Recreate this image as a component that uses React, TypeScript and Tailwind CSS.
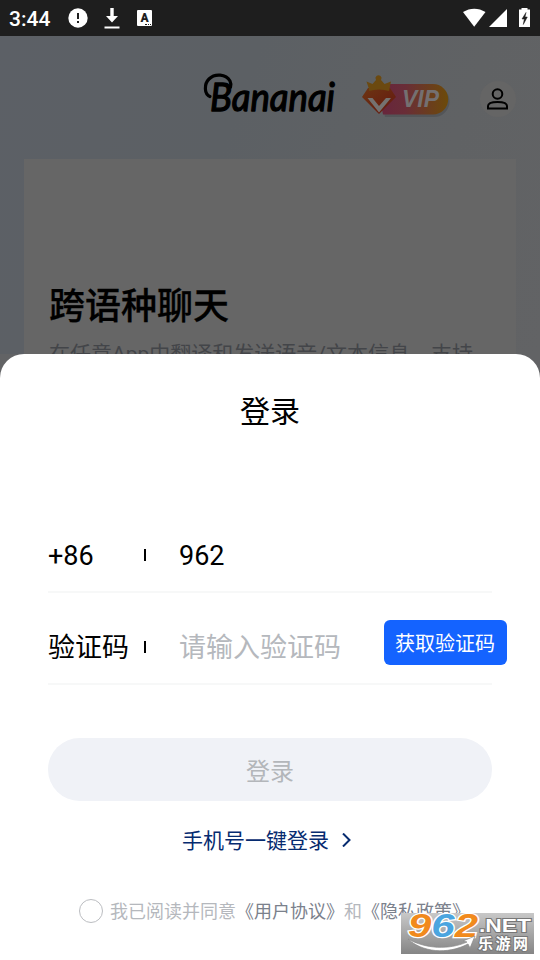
import { useState } from "react";

function StatusBar() {
  return (
    <div className="flex h-9 items-center justify-between bg-[#1e1e1e] pr-[9px] pl-[9px] text-white">
      <div className="flex items-center">
        <span className="w-[59px] pt-px text-[21px] leading-9 font-medium">3:44</span>
        <svg className="h-5 w-5" viewBox="0 0 20 20">
          <circle cx="10" cy="10" r="9.7" fill="#fff" />
          <path d="M10 5v6M10 13v2" stroke="#1e1e1e" strokeWidth="2" />
        </svg>
        <svg className="ml-4 h-[22px] w-4" viewBox="0 0 16 22">
          <path d="M6.300 1h3.400v8H14l-6 6.500L2 9h4.300z" fill="#fff" />
          <path d="M0.500 20.500h15" stroke="#fff" strokeWidth="2" />
        </svg>
        <div className="relative ml-[17px] flex h-4 w-[15px] items-center justify-center rounded-[1px] bg-white text-[12px] leading-none font-black text-[#1e1e1e]">
          A
          <span className="absolute right-[1px] bottom-[1px] h-px w-[6px] border-b border-dotted border-[#1e1e1e]" />
        </div>
      </div>
      <svg className="h-5 w-[68px]" viewBox="0 0 68 20">
        <path d="M0 4C7-0.500 15.500-0.500 22.500 4L11.200 18.700z" fill="#fff" />
        <path d="M44 1V19H26z" fill="#fff" />
        <path d="M58.500 0h6v1.500H67V19H56V1.500h2.500z" fill="#fff" />
        <path d="M63 4.500l-4 6.500h2.300l-1 5.500 4-7.500h-2.300z" fill="#1e1e1e" stroke="#1e1e1e" strokeWidth="0.500" />
      </svg>
    </div>
  );
}

function Logo() {
  return (
    <div className="relative h-[46px] w-[132px]">
      <svg className="absolute inset-0 h-full w-full overflow-visible" viewBox="0 0 132 46">
        {/* swash around the capital */}
        <path
          d="M6 23.500C0 21 0 11 5 6C11 0 22 1 26 8C27 10 27 12 26.500 14"
          fill="none"
          stroke="#000"
          strokeWidth="3.200"
          strokeLinecap="round"
        />
        <text
          x="6"
          y="38"
          textLength="125"
          lengthAdjust="spacingAndGlyphs"
          stroke="#000"
          strokeWidth="1.3"
          strokeLinejoin="round"
          className="font-['Lato',sans-serif] text-[39px] font-normal italic"
        >
          Bananai
        </text>
      </svg>
    </div>
  );
}

function VipBadge() {
  return (
    <svg className="h-[46px] w-[92px]" viewBox="0 0 92 46">
      <defs>
        <linearGradient id="pill" x1="0" x2="1">
          <stop offset="0" stopColor="#67243d" />
          <stop offset="0.400" stopColor="#692d37" />
          <stop offset="1" stopColor="#6c4a09" />
        </linearGradient>
        <linearGradient id="gem" x1="0" y1="0" x2="1" y2="1">
          <stop offset="0" stopColor="#6c3512" />
          <stop offset="1" stopColor="#651710" />
        </linearGradient>
      </defs>
      <path d="M18 13h55a15.500 15.500 0 0 1 0 31H24z" fill="#4e5052" opacity="0.700" />
      <path d="M16 11h56a15.200 15.200 0 0 1 0 30.400H22z" fill="url(#pill)" />
      <path d="M7 15L29 15 35 24 18 41 1 24z" fill="url(#gem)" />
      <path d="M8 16L5.500 8.500l6 2.500 3.500-4a3 3 0 1 1 5 0l3.500 4 6.500-2.500L28 18q-10-3-20 0z" fill="#6b4910" />
      <path d="M6.500 25h5l6.500 8 7-8h5L18 39.500z" fill="#757270" />
      <text
        x="41"
        y="34"
        textLength="37"
        lengthAdjust="spacingAndGlyphs"
        fill="#747071"
        className="font-['Liberation_Sans',sans-serif] text-[23px] font-bold italic"
      >
        VIP
      </text>
    </svg>
  );
}

function Header() {
  return (
    <div className="flex h-[123px] items-start pt-[37px] pl-[204px]">
      <Logo />
      <div className="ml-[25px]">
        <VipBadge />
      </div>
      <div className="mt-2 ml-[27px] flex h-9 w-9 items-center justify-center rounded-full bg-[#656565]">
        <svg className="h-[22px] w-[22px]" viewBox="0 0 22 22" fill="none" stroke="#000" strokeWidth="2">
          <circle cx="10.500" cy="6" r="4.800" />
          <path d="M1 20.500v-2.500c0-5.500 19-5.500 19 0v2.500z" />
        </svg>
      </div>
    </div>
  );
}

interface FieldProps {
  label: string;
  children: React.ReactNode;
}

function Field({ label, children }: FieldProps) {
  return (
    <div className="flex h-[92px] items-center border-b-2 border-[#f7f8f8] pt-[18px] text-[27px] text-black">
      <span className="w-24 pt-[3px]">{label}</span>
      <span className="h-3 w-[2px] bg-black" />
      <div className="ml-[33px] flex flex-1 items-center pt-[3px]">{children}</div>
    </div>
  );
}

function Watermark() {
  return (
    <svg className="absolute right-[6px] bottom-[6px] h-[48px] w-[133px] overflow-visible" viewBox="0 0 133 48">
      <defs>
        <linearGradient id="mark" x1="0" y1="0" x2="0" y2="1">
          <stop offset="0" stopColor="#c8c8c8" />
          <stop offset="1" stopColor="#858585" />
        </linearGradient>
      </defs>
      <rect y="7" width="133" height="41" fill="url(#mark)" />
      <text
        x="7"
        y="31"
        textLength="70"
        lengthAdjust="spacingAndGlyphs"
        stroke="#fff"
        strokeWidth="2.5"
        paintOrder="stroke"
        className="font-['Liberation_Sans',sans-serif] text-[34px] font-bold italic"
      >
        <tspan fill="#f18a1c">9</tspan>
        <tspan fill="#4ba5df">6</tspan>
        <tspan fill="#f18a1c">2</tspan>
      </text>
      <text
        x="78"
        y="26"
        textLength="52"
        lengthAdjust="spacingAndGlyphs"
        fill="#fff"
        stroke="#777"
        strokeWidth="2"
        paintOrder="stroke"
        className="font-['Liberation_Sans',sans-serif] text-[19px] font-bold"
      >
        .NET
      </text>
      <text
        x="77"
        y="43"
        textLength="50"
        fill="#fff"
        stroke="#777"
        strokeWidth="2"
        paintOrder="stroke"
        className="font-['Noto_Sans_CJK_SC',sans-serif] text-[15px] font-bold"
      >
        乐游网
      </text>
      <path
        d="M7 33C25 43 48 44 66 36l-4-1 12-5-5 12-2-4C46 49 21 46 7 33z"
        fill="#fff"
        stroke="#888"
        strokeWidth="0.700"
      />
    </svg>
  );
}

function LoginSheet() {
  const [agreed, setAgreed] = useState(false);

  return (
    <div className="relative z-10 flex h-[606px] flex-col rounded-t-[24px] bg-white px-12">
      <h2 className="mt-[36px] h-11 text-center text-[30px] leading-11 text-black">登录</h2>

      <div className="mt-[67px]">
        <Field label="+86">962</Field>
        <div className="relative">
          <Field label="验证码">
            <span className="text-[#b5b8bd]">请输入验证码</span>
          </Field>
          <button className="absolute top-[27px] -right-[15px] h-[45px] w-[123px] rounded-[6px] bg-[#1463ff] pt-[2px] pr-px text-[20px] text-white">
            获取验证码
          </button>
        </div>
      </div>

      <button className="mt-[53px] h-[63px] shrink-0 rounded-full bg-[#f0f2f7] pt-1 text-[24px] text-[#b3b6ba]">
        登录
      </button>

      <div className="mt-[26px] flex h-[30px] items-center pl-[134px] text-[21px] text-[#062b70]">
        手机号一键登录
        <svg className="mb-1 ml-3 h-[14px] w-3" viewBox="0 0 12 14" fill="none" stroke="currentColor" strokeWidth="2">
          <path d="M2 0.500l6.500 6.500-6.500 6.500" />
        </svg>
      </div>

      <div className="mt-[39px] ml-[31px] flex h-[30px] items-center text-[18px] whitespace-nowrap text-[#b5b8bd]">
        <button
          className={`mr-[7px] h-6 w-6 shrink-0 rounded-full border ${agreed ? "border-[#1463ff] bg-[#1463ff]" : "border-[#bbbdc1]"}`}
          onClick={() => setAgreed(!agreed)}
        />
        <p>
          我已阅读并同意
          <span className="text-[#7b818c]">《用户协议》</span>和
          <span className="text-[#7b818c]">《隐私政策》</span>
        </p>
      </div>

      <Watermark />
    </div>
  );
}

export default function App() {
  return (
    <div
      lang="zh-CN"
      className="flex h-[960px] w-[540px] flex-col overflow-hidden bg-[#626365] font-['Roboto','Noto_Sans_CJK_SC',sans-serif]"
    >
      <StatusBar />
      <div className="h-[318px] shrink-0 bg-[linear-gradient(110deg,#5c6066_0%,#5c6064_40%,#606264_75%,#626365_100%)]">
        <Header />
        <div className="mx-6 h-[220px] bg-[#666666] px-[25px] pt-[121px]">
          <h1 className="h-[54px] text-[36px] leading-[54px] font-medium text-black [-webkit-text-stroke:0.3px_#000]">
            跨语种聊天
          </h1>
          <p className="mt-[5px] text-[21px] leading-[30px] whitespace-nowrap text-[#434549]">
            在任意App中翻译和发送语音/文本信息，支持
          </p>
        </div>
      </div>
      <LoginSheet />
    </div>
  );
}
